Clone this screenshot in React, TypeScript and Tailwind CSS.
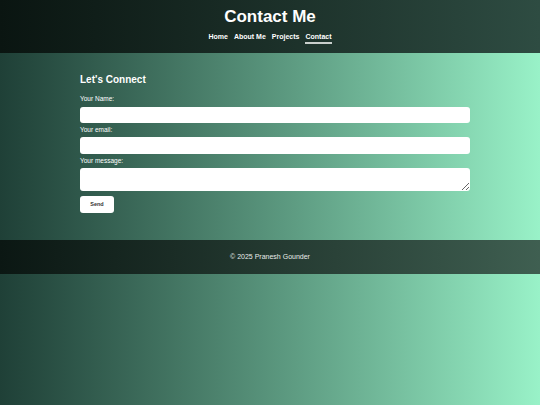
export default function App() {
  return (
    <div className="min-h-screen bg-linear-to-r from-[#1f4037] to-[#99f2c8] font-['Liberation_Sans',Arial,sans-serif] text-white">
      {/* Header */}
      <header className="h-[53px] bg-linear-to-r from-[#0a1511] to-[#2e4c42] flex flex-col items-center pt-[6px]">
        <h1 className="text-[17px] leading-[21px] font-bold">Contact Me</h1>
        <nav className="mt-[5px] flex gap-[6px] text-[7px] leading-[9px] font-bold">
          <a>Home</a>
          <a>About Me</a>
          <a>Projects</a>
          <a className="border-b-2 border-[#c9cfcc] pb-[1px]">Contact</a>
        </nav>
      </header>

      {/* Contact form */}
      <main className="pt-[21px] pb-[27px]">
        <div className="mx-auto w-[400px] pl-[10px]">
          <h2 className="text-[10px] leading-[12px] font-bold mb-[9px]">Let's Connect</h2>
          <form className="flex flex-col">
            <label className="text-[6.5px] leading-[8px] mb-[4px]">Your Name:</label>
            <input className="h-[16px] bg-white rounded-[3px] mb-[3px] outline-none" />
            <label className="text-[6.5px] leading-[8px] mb-[3px]">Your email:</label>
            <input className="h-[17px] bg-white rounded-[3px] mb-[3px] outline-none" />
            <label className="text-[6.5px] leading-[8px] mb-[3px]">Your message:</label>
            <textarea className="h-[23px] bg-white rounded-[3px] mb-[5px] outline-none block" />
            <button
              type="button"
              className="self-start w-[34px] h-[17px] bg-white rounded-[3px] text-[#333] text-[5.5px] font-bold"
            >
              Send
            </button>
          </form>
        </div>
      </main>

      {/* Footer */}
      <footer className="h-[34px] bg-linear-to-r from-[#0b1713] to-[#3f5f51] flex items-center justify-center text-[7px] text-[#e8ece9]">
        © 2025 Pranesh Gounder
      </footer>
    </div>
  );
}
